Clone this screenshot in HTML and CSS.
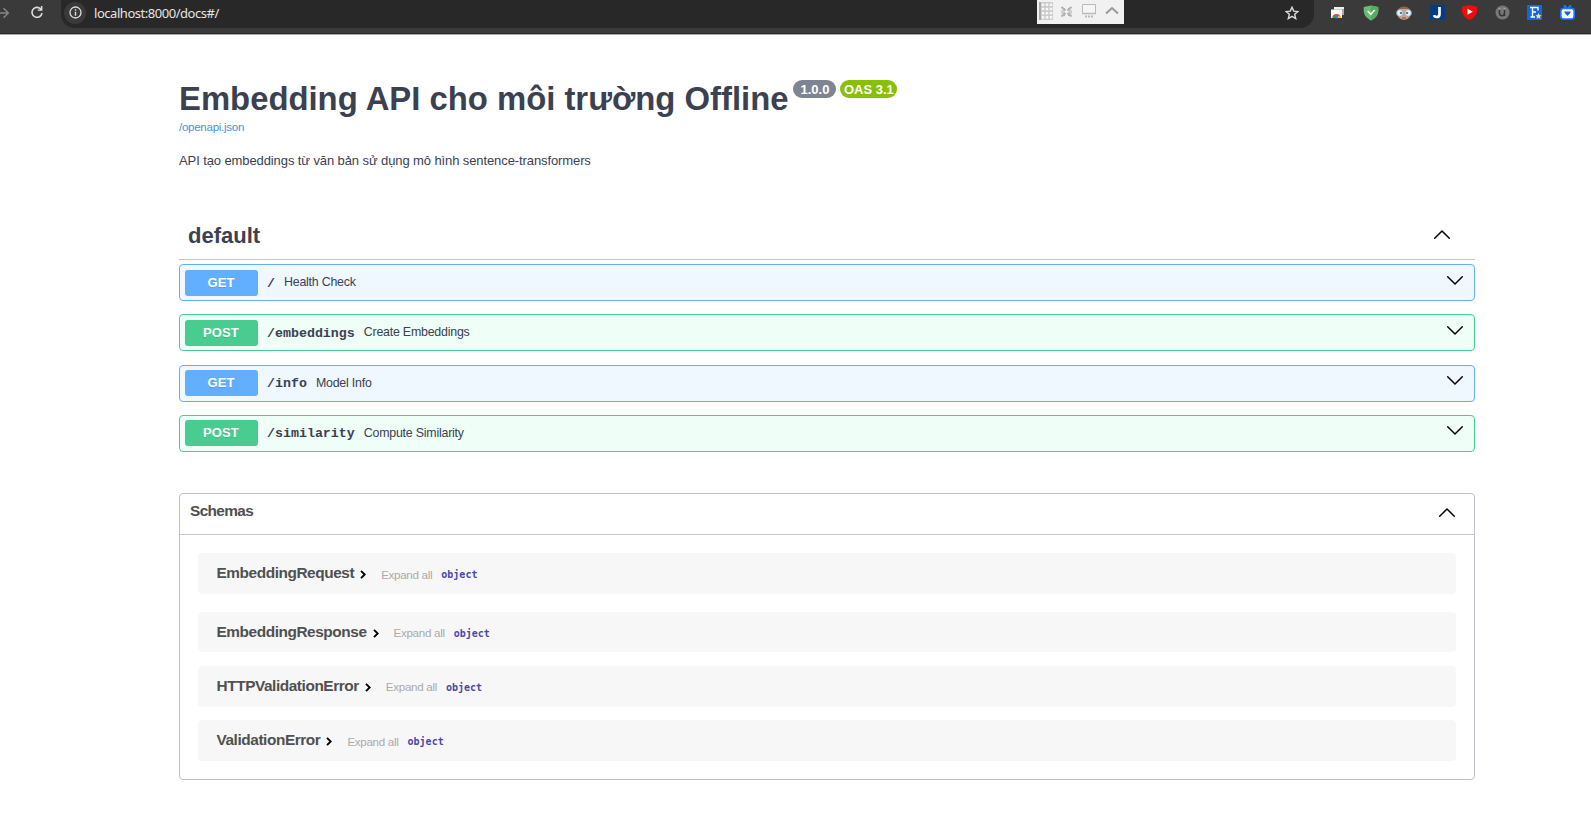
FILE: index.html
```html
<!DOCTYPE html>
<html lang="vi">
<head>
<meta charset="utf-8">
<title>Embedding API cho môi trường Offline</title>
<link rel="stylesheet" href="styles.css">
</head>
<body>
<svg width="0" height="0" class="defs">
  <symbol id="down" viewBox="0 0 16 9"><path d="M.7.8 8 8 15.3.8" fill="none" stroke="#000" stroke-width="1.5" stroke-linecap="round" stroke-linejoin="round"/></symbol>
  <symbol id="up" viewBox="0 0 16 9"><path d="M.7 8.2 8 1l7.3 7.2" fill="none" stroke="#000" stroke-width="1.5" stroke-linecap="round" stroke-linejoin="round"/></symbol>
  <symbol id="right" viewBox="0 0 6 9"><path d="M1 .9 4.700 4.500 1 8.100" fill="none" stroke="#000" stroke-width="1.900"/></symbol>
</svg>
<header class="browser">
  <svg class="forward" width="10" height="12" viewBox="0 0 10 12"><path d="M0 6h8M3.500 1.300 8.300 6l-4.800 4.700" fill="none" stroke="#858585" stroke-width="1.500"/></svg>
  <svg class="reload" width="12" height="12" viewBox="0 0 12 12"><path d="M10.400 3.900A5 5 0 1 0 11 7" fill="none" stroke="#ddd" stroke-width="1.600"/><path d="M11.400 0v4.700H6.700V3.400h3.200V0z" fill="#ddd"/></svg>
  <div class="address">
    <span class="site"><svg width="13" height="13" viewBox="0 0 13 13"><circle cx="6.500" cy="6.500" r="5.500" fill="none" stroke="#ddd" stroke-width="1.300"/><path d="M6.500 5.800v3.900M6.500 3.200v1.500" stroke="#ddd" stroke-width="1.400"/></svg></span>
    <span class="url">localhost:8000/docs#/</span>
    <svg class="star" width="14" height="14" viewBox="0 0 14 14"><path d="m7 1.200 1.700 3.900 4.200.4-3.200 2.800 1 4.200L7 10.300l-3.700 2.200 1-4.200L1.100 5.500l4.200-.4z" fill="none" stroke="#ddd" stroke-width="1.400"/></svg>
    <div class="capture">
      <svg width="87" height="24" viewBox="0 0 87 24">
        <path d="M2 2h14v18H2z" fill="#cbcbcb"/><path d="M2 2h2v18H2z" fill="#aaa"/>
        <path d="M6 3.500v16M10 3.500v16M14 3.500v16" stroke="#f8f8f8" stroke-width="2.500" stroke-dasharray="2.600 1.600"/>
        <g stroke="#b0b0b0" fill="none"><path d="m24.500 7 4 3.500M34.500 7l-4 3.500M24.500 16.500l4-3.500M34.500 16.500l-4-3.500" stroke-width="2"/><path d="M27.500 8v3H24M31.500 8v3H35M27.500 16v-3H24M31.500 16v-3H35"/></g>
        <path d="M45.500 4.500h13v9h-13z" fill="#f5f5f5" stroke="#bbb"/><path d="M45 13.500h14" stroke="#bbb" stroke-width="1.500"/><path d="M48 16.500h9" stroke="#bbb" stroke-width="1.800" stroke-dasharray="2 1"/>
        <path d="m69 13.500 6-5.500 6 5.500" stroke="#999" stroke-width="2" fill="none"/>
      </svg>
    </div>
  </div>
  <div class="extensions">
    <svg width="15" height="15" viewBox="0 0 15 15"><path d="M4 2h10v8H4z" fill="#aaa"/><path d="M4 2h10v2H4z" fill="#eee"/><path d="M1 4.500h11V13H1z" fill="#f7f7f7"/><path d="M2.500 13a4 4 0 0 1 8 0z" fill="#e84234"/><path d="M2.500 13a4 4 0 0 1 1.300-3l2 3z" fill="#26a05a"/><path d="M10.500 13a4 4 0 0 0-1.300-3L7 13z" fill="#f9bc15"/><circle cx="6.500" cy="12" r="1.600" fill="#427de0"/></svg>
    <svg width="16" height="16" viewBox="0 0 16 16"><path d="M8 .5 15.300 2v4C15 10.500 12 13.500 8 15.500 4 13.500 1 10.500.7 6V2z" fill="#68bc71"/><path d="M8 .5 15.300 2v4C15 10.500 12 13.500 8 15.500z" fill="#5aa865"/><path d="m4.700 6 3.100 3.300L11.700 5" fill="none" stroke="#fff" stroke-width="1.500"/></svg>
    <svg width="16" height="16" viewBox="0 0 16 16"><path d="M2 6C2 1 14 1 14 6v5c-2 5-10 5-12 0z" fill="#d3a384"/><path d="M2 5.500C3 0 13 0 14 5.500L11 4H5z" fill="#92664c"/><circle cx="4" cy="8" r="3.400" fill="#edf4f5" stroke="#8fa0a8"/><circle cx="12" cy="8" r="3.400" fill="#edf4f5" stroke="#8fa0a8"/><circle cx="5" cy="8" r="1.300" fill="#4c809c"/><circle cx="11" cy="8" r="1.300" fill="#4c809c"/><path d="M6 13h4" stroke="#8a493c"/></svg>
    <svg width="15" height="15" viewBox="0 0 15 15"><path d="M0 0h15v15H0z" fill="#053d80"/><path d="M9.500 2v7.200c0 2-1.300 2.800-2.800 2.800-1.300 0-2.300-.5-2.800-1.800" fill="none" stroke="#fff" stroke-width="2.700"/></svg>
    <svg width="15" height="15" viewBox="0 0 15 15"><path d="M7.500 0 15 1.700v4.500c-.5 4-3.500 7-7.500 8.800C3.500 13.200.5 10.200 0 6.200V1.700z" fill="#f30b0b"/><path d="m5.500 3.800 5.300 3-5.300 3z" fill="#fff"/></svg>
    <svg width="15" height="15" viewBox="0 0 15 15"><circle cx="7.500" cy="7.500" r="7" fill="#777"/><path d="M4.500 4v4c0 3.500 5 3.500 5 0V4M9.500 8v3" fill="none" stroke="#333" stroke-width="1.500"/><path d="M3.500 4h2M8.500 4h2" stroke="#ccc"/></svg>
    <svg width="15" height="15" viewBox="0 0 15 15"><path d="M0 0h15v15H0z" fill="#1666d8"/><path d="M3 2.500h8v3M5.500 2.500v9M3.500 12h4.500M5.500 7H9" fill="none" stroke="#fff" stroke-width="1.400"/><path d="m11.500 8 1 2 2 .2-1.500 1.500.4 2.200-1.900-1.200-1.900 1.200.4-2.200-1.500-1.500 2-.2z" fill="#ffdc6d"/></svg>
    <svg width="15" height="15" viewBox="0 0 15 15"><path d="m4 0 2.500 3M11 0 8.500 3" stroke="#1677ff" stroke-width="2"/><rect x=".8" y="3.300" width="13.400" height="10.700" rx="2.800" fill="#fff" stroke="#1677ff" stroke-width="1.700"/><path d="M4.500 6.500h6v1.200L7.500 11l-3-3.300z" fill="#1463dd"/></svg>
  </div>
</header>
<main>
  <section class="info">
    <h1><span class="title-text">Embedding API cho môi trường Offline</span><span class="badge version">1.0.0</span><span class="badge oas">OAS 3.1</span></h1>
    <a class="spec">/openapi.json</a>
    <p>API tạo embeddings từ văn bản sử dụng mô hình sentence-transformers</p>
  </section>
  <section class="operations">
    <h2 class="tag"><span>default</span><svg width="16" height="9"><use href="#up"/></svg></h2>
    <div class="op get"><b class="method">GET</b><code>/</code><span class="summary">Health Check</span><svg width="16" height="9"><use href="#down"/></svg></div>
    <div class="op post"><b class="method">POST</b><code>/embeddings</code><span class="summary">Create Embeddings</span><svg width="16" height="9"><use href="#down"/></svg></div>
    <div class="op get"><b class="method">GET</b><code>/info</code><span class="summary">Model Info</span><svg width="16" height="9"><use href="#down"/></svg></div>
    <div class="op post"><b class="method">POST</b><code>/similarity</code><span class="summary">Compute Similarity</span><svg width="16" height="9"><use href="#down"/></svg></div>
  </section>
  <section class="schemas">
    <h3><span>Schemas</span><svg width="16" height="9"><use href="#up"/></svg></h3>
    <div class="models">
      <div class="model first"><b>EmbeddingRequest</b><svg width="6" height="9"><use href="#right"/></svg><span>Expand all</span><code>object</code></div>
      <div class="model"><b>EmbeddingResponse</b><svg width="6" height="9"><use href="#right"/></svg><span>Expand all</span><code>object</code></div>
      <div class="model"><b>HTTPValidationError</b><svg width="6" height="9"><use href="#right"/></svg><span>Expand all</span><code>object</code></div>
      <div class="model"><b>ValidationError</b><svg width="6" height="9"><use href="#right"/></svg><span>Expand all</span><code>object</code></div>
    </div>
  </section>
</main>
</body>
</html>
```
FILE: styles.css
```css
* { box-sizing: border-box; }
body { margin: 0; height: 817px; overflow: hidden; background: #fff; color: #3b4151; font-family: "Liberation Sans", Arial, sans-serif; white-space: nowrap; }
svg { display: block; flex: none; }
.defs { position: absolute; }
h1, h2, h3, p { margin: 0; }
.browser { height: 35px; background: #3a3a3a; border-bottom: 1px solid #aaa; display: flex; box-shadow: inset 0 -1px #292929; }
.forward { margin-top: 7px; }
.reload { margin: 6px 0 0 21px; }
.address { position: relative; display: flex; align-items: center; width: 1253px; height: 28px; margin-left: 18px; padding: 0 15px 3px 4px; background: #282828; border-radius: 0 0 14px 14px; }
.site { display: grid; place-items: center; width: 22px; height: 22px; margin-left: -1px; border-radius: 50%; background: #3a3a3a; }
.url { margin-left: 8px; color: #e4e4e4; font: 13px "Noto Sans", sans-serif; letter-spacing: -.46px; }
.star { margin-left: auto; }
.capture { position: absolute; left: 976px; top: 0; width: 87px; height: 24px; background: #f1f1f1; }
.extensions { display: flex; gap: 17.5px; margin: 5px 0 0 16px; }
main { width: 1296px; margin-left: 179px; }
.info { height: 179px; padding-top: 45px; }
h1 { display: flex; height: 38px; font-size: 32.85px; line-height: 38px; }
.badge { height: 18px; margin-top: 0; border-radius: 9px; color: #fff; font-size: 13px; line-height: 19px; text-align: center; }
.version { width: 43px; margin-left: 5px; background: #7d8492; }
.oas { width: 57px; margin-left: 4px; background: #89bf04; }
.spec { display: block; margin-top: 2px; color: #4990e2; font-size: 11.6px; line-height: 14px; letter-spacing: -.3px; }
.info p { margin-top: 18px; font-size: 13px; line-height: 18px; letter-spacing: -.1px; }
.tag { display: flex; align-items: center; justify-content: space-between; height: 46px; margin-bottom: 4px; padding: 0 25px 1px 9px; border-bottom: 1px solid #c4c6ca; font-size: 22px; }
.tag svg { margin-top: -3px; }
.op { display: flex; align-items: center; height: 37px; margin-bottom: 13.3px; padding: 0 11px 0 4.5px; border: 1px solid; border-radius: 4px; }
.op.get { border-color: #61affe; background: #eff7ff; }
.op.post { border-color: #49cc90; background: #effef7; }
.method { width: 73px; height: 26px; border-radius: 3px; color: #fff; font-size: 13px; line-height: 26px; letter-spacing: .1px; text-align: center; text-shadow: 0 1px rgb(0 0 0 / 10%); }
.get .method { background: #61affe; }
.post .method { background: #49cc90; }
.op code { margin: 1px 0 0 9.5px; font: bold 13.3px "Liberation Mono", monospace; }
.summary { margin: -1px 0 0 9px; font-size: 12.4px; letter-spacing: -.22px; }
.op svg { margin: -5px 0 0 auto; }
.schemas { height: 287px; margin-top: 41px; border: 1px solid #bfc1c8; border-radius: 4px; color: #505050; }
h3 { display: flex; align-items: center; justify-content: space-between; height: 41px; padding: 0 19px 5px 10px; border-bottom: 1px solid #c4c6ca; font-size: 15.4px; letter-spacing: -.62px; }
h3 svg { margin-top: 2px; }
.models { padding: 18.5px 18px; }
.model { display: flex; align-items: center; height: 40.5px; margin-bottom: 13.8px; padding-left: 18.5px; border-radius: 4px; background: #f7f7f7; }
.model.first { margin-bottom: 18px; }
.model b { margin-top: -1px; font-size: 15.4px; letter-spacing: -.43px; }
.model svg { margin: 2px 0 0 6px; }
.model span { margin: 1px 0 0 15px; color: #aaa; font-size: 11.6px; letter-spacing: -.3px; }
.model code { margin: 2px 0 0 9px; color: #4949aa; font: bold 10px "DejaVu Sans Mono", monospace; }
```
